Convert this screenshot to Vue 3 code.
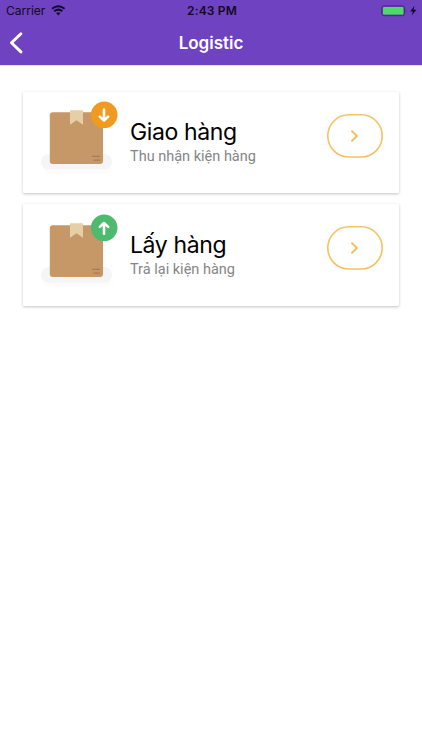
<script setup>
const items = [
  { title: 'Giao hàng', subtitle: 'Thu nhận kiện hàng', color: '#f19a20', arrow: 'M66 17.5V28M61.8 24.6L66 28.5L70.2 24.6' },
  { title: 'Lấy hàng', subtitle: 'Trả lại kiện hàng', color: '#4dba6d', arrow: 'M66 28.8V18.3M61.8 21.9L66 18L70.2 21.9' },
]
</script>

<template>
  <div class="screen">
    <header class="header">
      <div class="status">
        <div class="carrier">
          <span class="carrier-name">Carrier</span>
          <svg width="15" height="11" viewBox="0 0 15 11">
            <path d="M1 3.7Q7.3-1 13.6 3.7M3.2 6.2Q7.3 3 11.4 6.2" fill="none" stroke="#100a20" stroke-width="2" />
            <path d="M5.1 8.1Q7.3 6.4 9.5 8.1L7.3 10.4Z" fill="#100a20" />
          </svg>
        </div>
        <span class="time">2:43 PM</span>
        <svg class="battery" width="37" height="12" viewBox="0 0 37 12">
          <rect x="0.9" y="0.9" width="22.6" height="9.8" rx="2" fill="#6f42c1" stroke="#432a78" />
          <rect x="2" y="2" width="20.4" height="7.6" rx="1" fill="#4cdb64" />
          <path d="M24.8 4.2Q26.6 5.8 24.8 7.4Z" fill="#432a78" />
          <path d="M33.4 .7L29.3 6.4H32L30.6 10.8L35.4 4.8H32.6Z" fill="#100a20" />
        </svg>
      </div>
      <div class="navbar">
        <svg class="back" width="14" height="22" viewBox="0 0 14 22">
          <path d="M11.9 1.7L2.5 10.8L11.9 19.9" fill="none" stroke="#fff" stroke-width="2.9" stroke-linecap="round" stroke-linejoin="round" />
        </svg>
        <h1>Logistic</h1>
      </div>
    </header>
    <main class="list">
      <article v-for="item in items" :key="item.title" class="card">
        <svg class="parcel" width="80" height="76" viewBox="0 0 80 76">
          <rect x="5" y="66" width="68" height="16" rx="7" fill="#fcfcfc" />
          <rect x="3" y="62" width="71" height="15.5" rx="7.7" fill="#f5f5f5" />
          <rect x="11.8" y="20.2" width="53.2" height="51.8" rx="3" fill="#c69767" />
          <path d="M32 18.2H45V32.8L38.5 28.2L32 32.8Z" fill="#e5cfa4" />
          <path d="M54.5 64.3H61.5M56 68.1H61.5" stroke="#a77c52" stroke-width="1.2" stroke-linecap="round" />
          <circle cx="66.2" cy="22.8" r="13.3" :fill="item.color" />
          <path :d="item.arrow" fill="none" stroke="#fff" stroke-width="2.6" stroke-linecap="round" stroke-linejoin="round" />
        </svg>
        <div class="copy">
          <h2>{{ item.title }}</h2>
          <p>{{ item.subtitle }}</p>
        </div>
        <button class="open" type="button" :aria-label="item.title">
          <svg width="56" height="44" viewBox="0 0 56 44">
            <rect x="0.8" y="0.8" width="54.4" height="42.2" rx="21" fill="#fff" stroke="#f5c162" stroke-width="1.6" />
            <path d="M25 17.2L30 22L25 26.8" fill="none" stroke="#f5c162" stroke-width="2" stroke-linecap="round" stroke-linejoin="round" />
          </svg>
        </button>
      </article>
    </main>
  </div>
</template>

<style scoped>
.screen { min-height: 750px; background: #fff; font-family: Inter, sans-serif; }
.header { height: 65px; background: #6f42c1; border-bottom: 1px solid #e9e2f5; box-sizing: content-box; }
.status { display: grid; grid-template-columns: 1fr auto 1fr; align-items: center; height: 21px; padding: 0 4px 0 6px; color: #100a20; }
.carrier { display: flex; align-items: center; gap: 6px; }
.carrier-name { font-size: 12px; }
.time { font-size: 12px; font-weight: 600; letter-spacing: 0.15px; }
.battery { justify-self: end; }
.navbar { display: grid; grid-template-columns: 14px 1fr 14px; align-items: center; height: 43px; padding: 0 9px; }
h1 { margin: 0; text-align: center; color: #fff; font-size: 17px; line-height: 22px; font-weight: 600; }
.list { display: flex; flex-direction: column; gap: 11.2px; padding: 25.8px 23px 0; }
.card { display: flex; align-items: flex-start; height: 101.3px; background: #fff; border-radius: 1px; box-shadow: 0 1px 3px rgba(0, 0, 0, 0.24); }
.parcel { margin: 0.3px 0 0 15px; overflow: visible; }
.copy { flex: 1; padding: 26.3px 0 0 12px; white-space: nowrap; }
h2 { margin: 0; color: #000; font-size: 23px; line-height: 29px; font-weight: 400; letter-spacing: -0.38px; }
p { margin: 0; color: #858585; font: 14.5px/20px Roboto, sans-serif; }
.open { display: flex; margin: 21.8px 16px 0 0; padding: 0; border: 0; border-radius: 22px; background: transparent; }
</style>

<style>
body { margin: 0; background: #fff; }
</style>
